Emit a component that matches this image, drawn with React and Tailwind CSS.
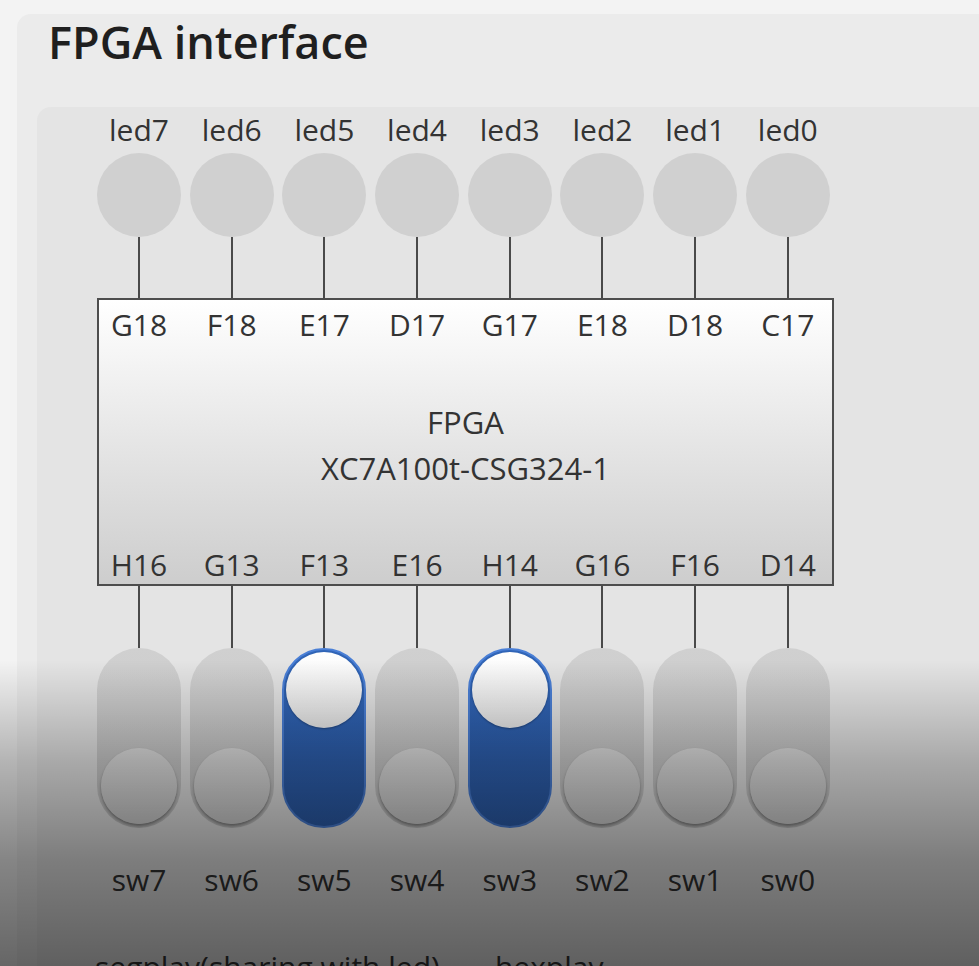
import React from "react";

const leds = ["led7", "led6", "led5", "led4", "led3", "led2", "led1", "led0"];
const topPins = ["G18", "F18", "E17", "D17", "G17", "E18", "D18", "C17"];
const bottomPins = ["H16", "G13", "F13", "E16", "H14", "G16", "F16", "D14"];
const switches = [
  { name: "sw7", on: false },
  { name: "sw6", on: false },
  { name: "sw5", on: true },
  { name: "sw4", on: false },
  { name: "sw3", on: true },
  { name: "sw2", on: false },
  { name: "sw1", on: false },
  { name: "sw0", on: false },
];

const Row = ({ children, className = "" }) => (
  <div className={"flex gap-[8.7px] " + className}>{children}</div>
);

const Wire = ({ h }) => (
  <Row>
    {leds.map((l) => (
      <div key={l} className="flex w-[84px] justify-center">
        <div className={"w-[2px] bg-[#4a4a4a] " + h} />
      </div>
    ))}
  </Row>
);

const Switch = ({ on }) =>
  on ? (
    <div className="flex h-[180px] w-[84px] flex-col rounded-full border-2 border-[#4a7fd6] bg-gradient-to-b from-[#3166b9] to-[#2c5dab] p-[2px]">
      <div className="h-[76px] w-[76px] rounded-full bg-gradient-to-b from-white to-[#e9e9e9] shadow-[0_1px_2px_rgba(0,0,0,0.3)]" />
    </div>
  ) : (
    <div className="flex h-[180px] w-[84px] flex-col justify-end rounded-full bg-gradient-to-b from-[#d0d0d0] to-[#c6c6c6] p-[4px]">
      <div className="h-[76px] w-[76px] rounded-full bg-gradient-to-b from-[#e0e0e0] to-[#d2d2d2] shadow-[0_2px_3px_rgba(0,0,0,0.35)]" />
    </div>
  );

export default function App() {
  return (
    <div className="relative h-[966px] overflow-hidden bg-[#f3f3f3] pl-[17px] pt-[14px] font-['Open_Sans',sans-serif] text-[#333]">
      <div className="w-[1000px] rounded-tl-[14px] bg-[#ebebeb] pl-[20px] pt-[5px]">
        <h1 className="pl-[11px] text-[45px] font-semibold leading-none text-[#1f1f1f]">
          FPGA interface
        </h1>

        <div className="mt-[43px] rounded-tl-[14px] bg-[#e4e4e4] pl-[60px] pt-[5px] text-[30px] leading-[36px]">
          <Row>
            {leds.map((l) => (
              <div key={l} className="w-[84px] text-center">
                {l}
              </div>
            ))}
          </Row>

          <Row className="mt-[5px]">
            {leds.map((l) => (
              <div key={l} className="h-[84px] w-[84px] rounded-full bg-[#d0d0d0]" />
            ))}
          </Row>

          <Wire h="h-[61px]" />

          <div className="flex h-[288px] w-[737px] flex-col border-2 border-[#4d4d4d] bg-gradient-to-b from-white to-[#cdcdcd] pb-[1px] pt-[7px]">
            <Row className="ml-[-2px]">
              {topPins.map((p) => (
                <div key={p} className="w-[84px] text-center">
                  {p}
                </div>
              ))}
            </Row>
            <div className="flex flex-1 flex-col items-center justify-center text-[31px] leading-[46px]">
              <div>FPGA</div>
              <div>XC7A100t-CSG324-1</div>
            </div>
            <Row className="ml-[-2px]">
              {bottomPins.map((p) => (
                <div key={p} className="w-[84px] text-center">
                  {p}
                </div>
              ))}
            </Row>
          </div>

          <Wire h="h-[62px]" />

          <Row>
            {switches.map((s) => (
              <Switch key={s.name} on={s.on} />
            ))}
          </Row>

          <Row className="mt-[34px]">
            {switches.map((s) => (
              <div key={s.name} className="w-[84px] text-center">
                {s.name}
              </div>
            ))}
          </Row>

          <div className="ml-[-2px] mt-[51px] flex gap-[55px] pb-[40px]">
            <span>segplay(sharing with led)</span>
            <span>hexplay</span>
          </div>
        </div>
      </div>

      <div className="pointer-events-none absolute inset-x-0 bottom-0 h-[306px] bg-[linear-gradient(to_bottom,rgba(0,0,0,0)_0%,rgba(0,0,0,0.26)_33%,rgba(0,0,0,0.45)_65%,rgba(0,0,0,0.58)_100%)]" />
    </div>
  );
}
